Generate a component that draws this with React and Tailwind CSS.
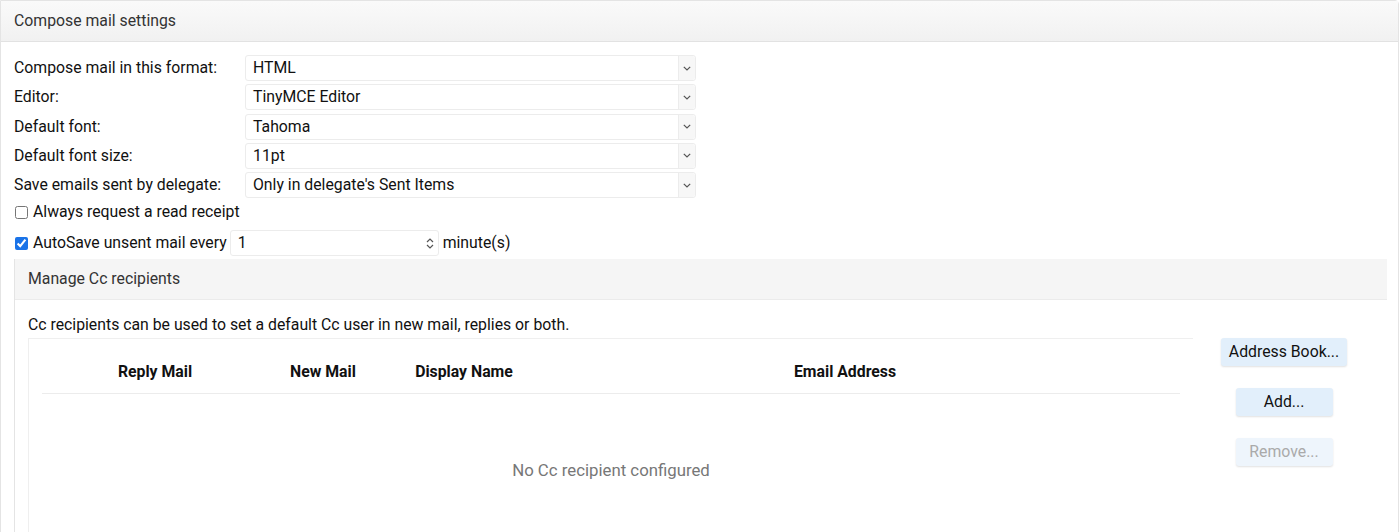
import { useState } from 'react';

const rows = [
  { label: 'Compose mail in this format:', value: 'HTML' },
  { label: 'Editor:', value: 'TinyMCE Editor' },
  { label: 'Default font:', value: 'Tahoma' },
  { label: 'Default font size:', value: '11pt' },
  { label: 'Save emails sent by delegate:', value: "Only in delegate's Sent Items" },
];

function Chevron() {
  return (
    <svg className="w-[8px] h-[5px] text-[#555]" viewBox="0 0 8 5" fill="none" stroke="currentColor" strokeWidth="1.2">
      <path d="M0.8 0.8L4 4L7.2 0.8" />
    </svg>
  );
}

function SelectBox({ value }) {
  return (
    <div className="w-[451px] h-[26px] flex border border-[#ececec] rounded-[3px] bg-white">
      <div className="flex-1 flex items-center pl-[7px] text-[15.8px] text-[#111]">{value}</div>
      <div className="w-[17px] flex items-center justify-center bg-[#f7f7f7] border-l border-[#ececec] rounded-r-[3px]">
        <Chevron />
      </div>
    </div>
  );
}

function Btn({ children, disabled, className }) {
  return (
    <button
      disabled={disabled}
      className={
        'h-[28px] rounded-[3px] text-[15.8px] shadow-[0_1px_2px_rgba(0,0,0,0.12)] ' +
        (disabled ? 'bg-[#eef5fc] text-[#aaaaaa] ' : 'bg-[#e2effb] text-[#111] ') +
        className
      }
    >
      {children}
    </button>
  );
}

export default function App() {
  const [receipt, setReceipt] = useState(false);
  const [autosave, setAutosave] = useState(true);

  return (
    <div className="w-[1400px] h-[532px] overflow-hidden bg-white font-['Roboto',sans-serif] text-[#111]">
      <div className="w-[1399px] border border-[#e4e4e4] rounded-tr-[4px] h-[560px]">
        <div className="h-[41px] flex items-center px-[13px] bg-gradient-to-b from-[#fafafa] to-[#f1f1f1] border-b border-[#e2e2e2] text-[15.8px] text-[#333]">
          Compose mail settings
        </div>

        <div className="pl-[13px] pr-[11px] pt-[13px]">
          <div className="flex flex-col gap-[3.25px]">
            {rows.map((r) => (
              <div key={r.label} className="flex items-center">
                <div className="w-[231px] text-[15.8px]">{r.label}</div>
                <SelectBox value={r.value} />
              </div>
            ))}
          </div>

          <label className="flex items-center h-[20px] mt-[4px] text-[15.8px]">
            <input
              type="checkbox"
              checked={receipt}
              onChange={(e) => setReceipt(e.target.checked)}
              className="w-[13px] h-[13px] ml-[1px] mr-[5px]"
            />
            Always request a read receipt
          </label>

          <div className="flex items-center mt-[8px] text-[15.8px]">
            <input
              type="checkbox"
              checked={autosave}
              onChange={(e) => setAutosave(e.target.checked)}
              className="w-[13px] h-[13px] ml-[1px] mr-[5px] accent-[#1a73e8]"
            />
            <span>AutoSave unsent mail every</span>
            <div className="ml-[3px] w-[209px] h-[26px] flex border border-[#ececec] rounded-[3px]">
              <div className="flex-1 flex items-center pl-[7px]">1</div>
              <div className="w-[16px] flex items-center justify-center">
                <svg className="w-[8px] h-[11px] text-[#555]" viewBox="0 0 8 11" fill="none" stroke="currentColor" strokeWidth="1.2">
                  <path d="M1 4L4 1L7 4M1 7L4 10L7 7" />
                </svg>
              </div>
            </div>
            <span className="ml-[4px]">minute(s)</span>
          </div>

          <div className="mt-[3px] border-l border-[#e4e4e4]">
            <div className="h-[41px] flex items-center pl-[13px] bg-[#f5f5f5] border-b border-[#ebebeb] text-[15.8px] text-[#333]">
              Manage Cc recipients
            </div>
            <div className="pl-[13px] pt-[16px]">
              <div className="text-[15.8px] leading-[18px]">
                Cc recipients can be used to set a default Cc user in new mail, replies or both.
              </div>
              <div className="flex mt-[4px]">
                <div className="w-[1165px] h-[200px] border-l border-t border-[#efefef] px-[13px] pt-[11px]">
                  <div className="h-[44px] flex items-center border-b border-[#ececec] text-[15.8px] font-bold">
                    <div className="w-[226px] text-center">Reply Mail</div>
                    <div className="w-[110px] text-center">New Mail</div>
                    <div className="w-[172px] text-center">Display Name</div>
                    <div className="flex-1 text-center pr-[40px]">Email Address</div>
                  </div>
                  <div className="h-[89px] flex items-end justify-center text-[16.8px] text-[#777]">
                    No Cc recipient configured
                  </div>
                </div>
                <div className="w-[182px] flex flex-col items-center gap-[22px]">
                  <Btn className="w-[126px]">Address Book...</Btn>
                  <Btn className="w-[97px]">Add...</Btn>
                  <Btn disabled className="w-[97px]">Remove...</Btn>
                </div>
              </div>
            </div>
          </div>
        </div>
      </div>
    </div>
  );
}
